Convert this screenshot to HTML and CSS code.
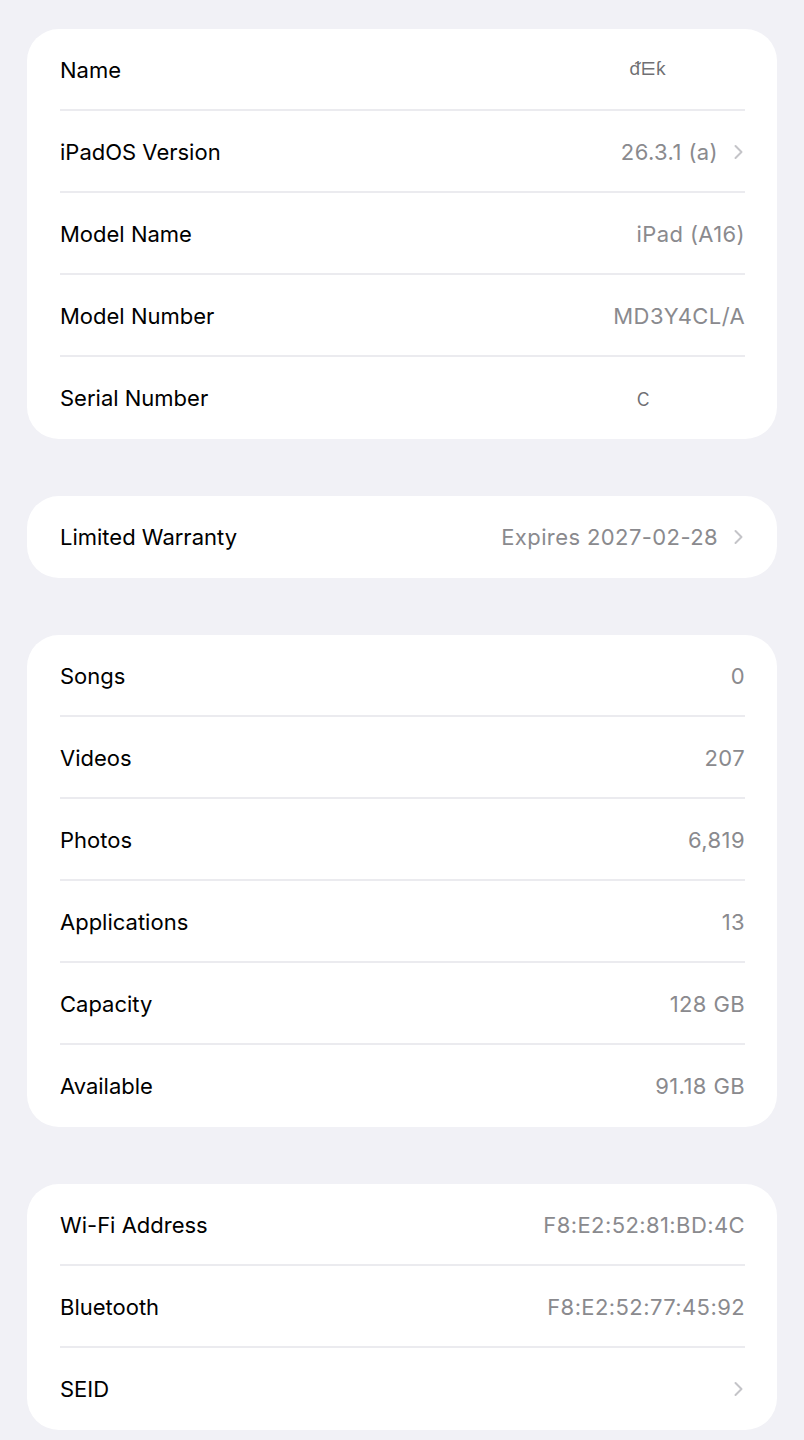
FILE: index.html
```html
<!DOCTYPE html>
<html lang="en">
<head>
<meta charset="utf-8">
<title>About</title>
<link rel="stylesheet" href="styles.css">
</head>
<body>
<main class="page">
  <section class="card">
    <div class="row"><span class="label">Name</span><span class="value masked masked-name">ᵭ⋿ƙ</span></div>
    <div class="row"><span class="label">iPadOS Version</span><span class="value">26.3.1 (a)</span><svg class="chev" viewBox="0 0 10 16"><path d="M2 2 L8 8 L2 14"/></svg></div>
    <div class="row"><span class="label">Model Name</span><span class="value">iPad (A16)</span></div>
    <div class="row"><span class="label">Model Number</span><span class="value">MD3Y4CL/A</span></div>
    <div class="row"><span class="label">Serial Number</span><span class="value masked masked-serial">c</span></div>
  </section>

  <section class="card">
    <div class="row"><span class="label">Limited Warranty</span><span class="value">Expires 2027-02-28</span><svg class="chev" viewBox="0 0 10 16"><path d="M2 2 L8 8 L2 14"/></svg></div>
  </section>

  <section class="card">
    <div class="row"><span class="label">Songs</span><span class="value">0</span></div>
    <div class="row"><span class="label">Videos</span><span class="value">207</span></div>
    <div class="row"><span class="label">Photos</span><span class="value">6,819</span></div>
    <div class="row"><span class="label">Applications</span><span class="value">13</span></div>
    <div class="row"><span class="label">Capacity</span><span class="value">128 GB</span></div>
    <div class="row"><span class="label">Available</span><span class="value">91.18 GB</span></div>
  </section>

  <section class="card">
    <div class="row"><span class="label">Wi-Fi Address</span><span class="value">F8:E2:52:81:BD:4C</span></div>
    <div class="row"><span class="label">Bluetooth</span><span class="value">F8:E2:52:77:45:92</span></div>
    <div class="row"><span class="label">SEID</span><span class="value"></span><svg class="chev" viewBox="0 0 10 16"><path d="M2 2 L8 8 L2 14"/></svg></div>
  </section>
</main>
</body>
</html>
```
FILE: styles.css
```css
html, body {
  margin: 0;
  padding: 0;
  background: #f1f1f6;
}
body {
  font-family: Inter, "Noto Sans", "DejaVu Sans", sans-serif;
  -webkit-font-smoothing: antialiased;
}
.page {
  display: flex;
  flex-direction: column;
  gap: 57px;
  padding: 29px 27px 0 27px;
}
.card {
  background: #ffffff;
  border-radius: 32px;
  width: 750px;
  overflow: hidden;
  padding-bottom: 2px;
}
.row {
  position: relative;
  height: 82px;
  display: flex;
  align-items: center;
  margin: 0 32px 0 33px;
  box-sizing: border-box;
  gap: 16px;
  padding-top: 1px;
}
.card > .row:first-child {
  height: 80px;
}
.row + .row {
  border-top: 2px solid #ebebef;
}
.label {
  flex: 1;
  font-size: 22px;
  color: #000000;
}
.value {
  font-size: 22px;
  color: #8a8a8e;
  letter-spacing: 0.4px;
}
.chev {
  width: 11px;
  height: 16px;
  margin-left: -1px;
  margin-right: 1px;
  fill: none;
  stroke: #c4c4c8;
  stroke-width: 2;
  stroke-linecap: round;
  stroke-linejoin: round;
}
.masked {
  color: #6f6f73;
  font-size: 18px;
  letter-spacing: 0;
}
.masked-name {
  margin-right: 79px;
  margin-top: -4px;
}
.masked-serial {
  font-size: 24px;
  font-weight: 300;
  margin-right: 95px;
}
```
